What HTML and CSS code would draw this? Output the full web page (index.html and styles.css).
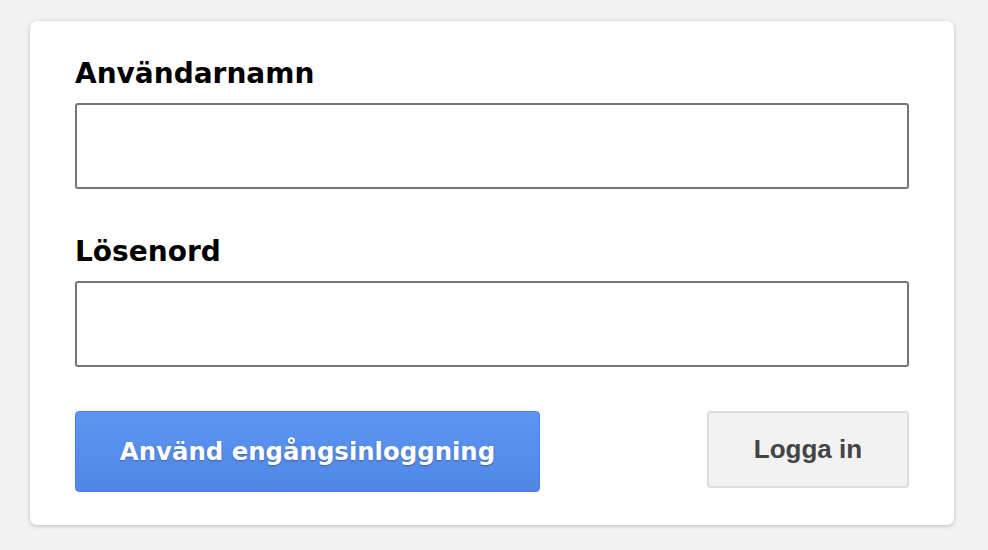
FILE: index.html
```html
<!DOCTYPE html>
<html lang="sv">
<head>
<meta charset="utf-8">
<link rel="stylesheet" href="styles.css">
</head>
<body>
<div class="page">
  <form class="card">
    <label class="label" for="u">Användarnamn</label>
    <input class="field" id="u" type="text">
    <label class="label second" for="p">Lösenord</label>
    <input class="field" id="p" type="password">
    <div class="actions">
      <button type="button" class="btn-sso">Använd engångsinloggning</button>
      <button type="submit" class="btn-login">Logga in</button>
    </div>
  </form>
</div>
</body>
</html>
```

FILE: styles.css
```css
html, body {
  margin: 0;
  padding: 0;
  background: #f2f2f2;
  width: 988px;
  height: 550px;
  overflow: hidden;
}
.page {
  padding: 21px 34px 0 30px;
}
.card {
  box-sizing: border-box;
  width: 924px;
  height: 504px;
  background: #fff;
  border-radius: 7px;
  box-shadow: 0 1px 4px rgba(0,0,0,0.22);
  padding: 35px 45px 0 45px;
  display: flex;
  flex-direction: column;
}
.label {
  font-family: "DejaVu Sans", Verdana, sans-serif;
  font-weight: bold;
  font-size: 28px;
  line-height: 36px;
  color: #000;
  margin-bottom: 11px;
}
.label.second {
  margin-top: 45px;
}
.field {
  box-sizing: border-box;
  width: 834px;
  height: 86px;
  border: 2px solid #767676;
  border-radius: 3px;
  margin: 0;
  background: #fff;
}
.actions {
  display: flex;
  justify-content: space-between;
  align-items: flex-start;
  margin-top: 44px;
}
.btn-sso {
  box-sizing: border-box;
  width: 465px;
  height: 81px;
  border: 1px solid #4b7fe2;
  border-radius: 4px;
  background: linear-gradient(#5d95f4, #5187e4);
  color: #fff;
  font-family: "DejaVu Sans", Verdana, sans-serif;
  font-weight: bold;
  font-size: 24.4px;
  text-shadow: 0 1px 2px rgba(0,0,0,0.3);
  padding: 0;
}
.btn-login {
  box-sizing: border-box;
  width: 202px;
  height: 77px;
  border: 2px solid #dcdcdc;
  border-radius: 4px;
  background: #f2f2f2;
  color: #444;
  font-family: "Liberation Sans", Arial, sans-serif;
  font-weight: bold;
  font-size: 26px;
  padding: 0;
}
```
